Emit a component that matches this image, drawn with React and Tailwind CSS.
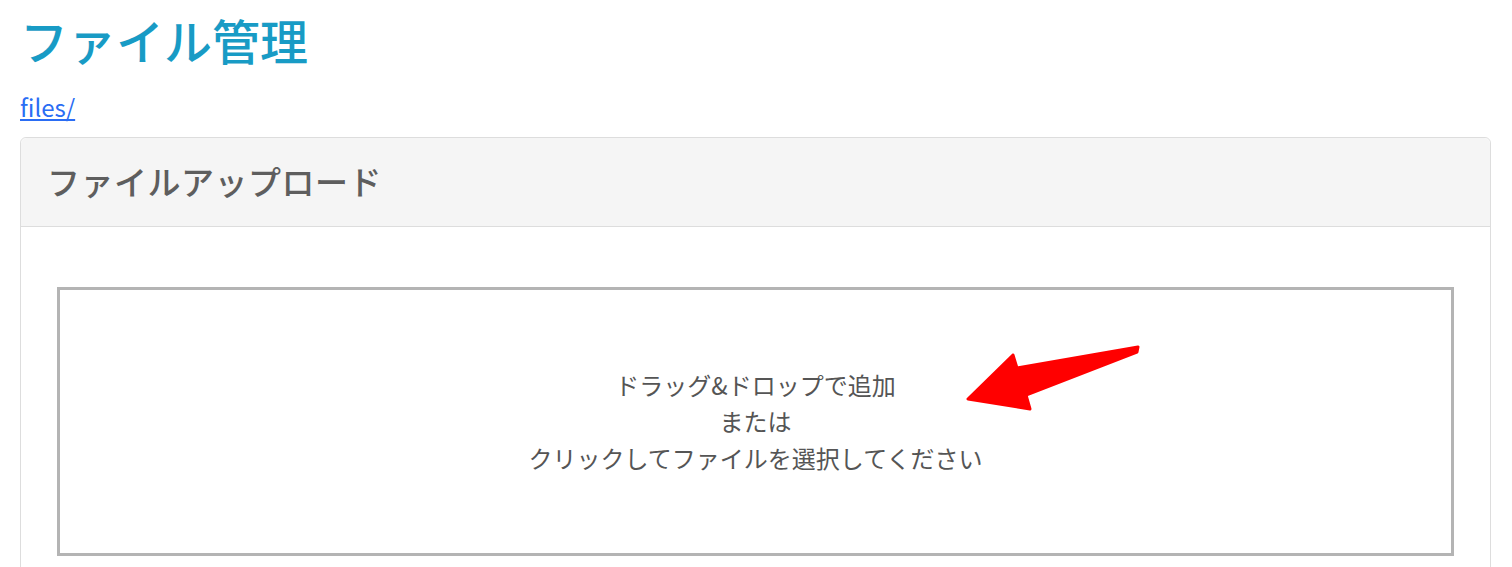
import React from "react";

export default function App() {
  return (
    <div className="relative min-h-[567px] bg-white pl-[20px] pr-[21px] font-['Noto_Sans_CJK_JP','Noto_Sans',sans-serif]">
      <h1 className="pt-[10px] text-[48px] leading-[58px] font-medium text-[#189bc5]">ファイル管理</h1>
      <div className="mt-[24px] text-[24px] leading-[30px]">
        <a href="#" className="text-[#2a6df4] underline">files/</a>
      </div>
      <div className="mt-[15px] rounded-t-[6px] border border-[#dddddd] bg-white">
        <div className="flex h-[89px] items-center border-b border-[#dddddd] bg-[#f5f5f5] pl-[26px] rounded-t-[6px]">
          <h2 className="text-[33px] tracking-[0.5px] font-medium text-[#5e5e5e]">ファイルアップロード</h2>
        </div>
        <div className="px-[36px] pt-[60px] pb-[40px]">
          <div className="flex h-[269px] flex-col items-center justify-center border-[3px] border-[#b4b4b4] text-center text-[24px] leading-[36.5px] text-[#555555]">
            <p>ドラッグ&amp;ドロップで追加</p>
            <p>または</p>
            <p>クリックしてファイルを選択してください</p>
          </div>
        </div>
      </div>
      <svg
        className="absolute left-[960px] top-[340px]"
        width="190"
        height="80"
        viewBox="0 0 190 80"
      >
        <polygon
          points="178,7 57,28 53,15 8,59 70,69 66,55 177,12"
          fill="#ff0000"
          stroke="#ff0000"
          strokeWidth="3"
          strokeLinejoin="round"
        />
      </svg>
    </div>
  );
}
